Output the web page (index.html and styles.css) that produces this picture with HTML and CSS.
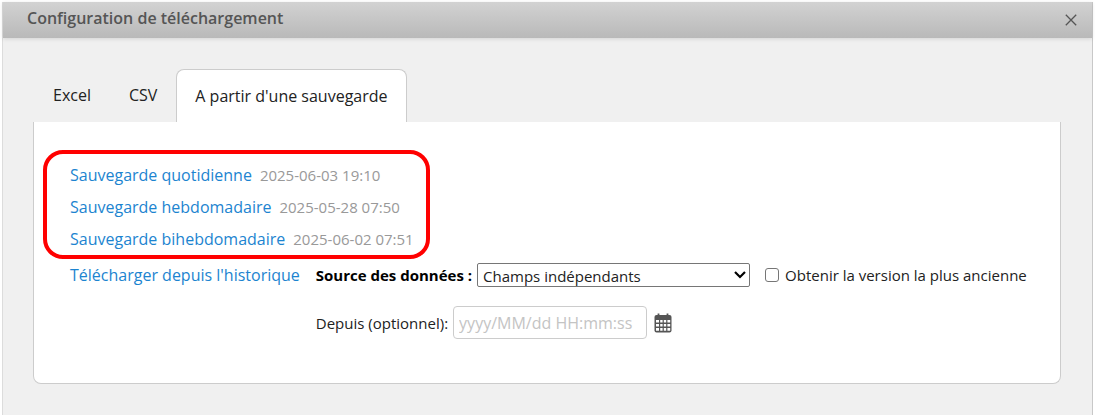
FILE: index.html
```html
<!DOCTYPE html>
<html lang="fr">
<head>
<meta charset="utf-8">
<title>Configuration de téléchargement</title>
<link rel="stylesheet" href="styles.css">
</head>
<body>
<main class="dialog">
  <header class="dialog-header">
    <h1 class="dialog-title">Configuration de téléchargement</h1>
    <button class="close" type="button" aria-label="Fermer">
      <svg width="12" height="12" viewBox="0 0 12 12" fill="none" stroke="currentColor" stroke-width="1.3"><path d="M0.8 0.8 L11.2 11.2 M11.2 0.8 L0.8 11.2"/></svg>
    </button>
  </header>
  <div class="dialog-body">
    <nav class="tabs">
      <button class="tab" type="button">Excel</button>
      <button class="tab" type="button">CSV</button>
      <button class="tab tab-active" type="button">A partir d'une sauvegarde</button>
    </nav>
    <section class="panel">
      <ul class="backups">
        <li class="backup"><a class="link" href="#">Sauvegarde quotidienne</a><time class="date">2025-06-03 19:10</time></li>
        <li class="backup"><a class="link" href="#">Sauvegarde hebdomadaire</a><time class="date">2025-05-28 07:50</time></li>
        <li class="backup"><a class="link" href="#">Sauvegarde bihebdomadaire</a><time class="date">2025-06-02 07:51</time></li>
      </ul>
      <div class="history">
        <a class="link" href="#">Télécharger depuis l'historique</a>
        <form class="options">
          <div class="row">
            <label class="label-strong" for="source">Source des données :</label>
            <span class="select-wrap">
              <select class="select" id="source"><option>Champs indépendants</option></select>
              <svg class="chevron" width="12" height="8" viewBox="0 0 12 8" fill="none" stroke="currentColor" stroke-width="2.2"><path d="M1 1 L6 6 L11 1"/></svg>
            </span>
            <input class="check" type="checkbox" id="oldest">
            <label class="label" for="oldest">Obtenir la version la plus ancienne</label>
          </div>
          <div class="row">
            <label class="label" for="since">Depuis (optionnel):</label>
            <input class="input" type="text" id="since" placeholder="yyyy/MM/dd HH:mm:ss">
            <button class="calendar" type="button" aria-label="Choisir une date">
              <svg width="18" height="20" viewBox="0 0 18 20">
                <rect x="0.5" y="2" width="17" height="17.5" rx="2" fill="#555"/>
                <path d="M4.5 0.5V4M13.5 0.5V4" stroke="#555" stroke-width="1.8"/>
                <path fill="#fff" d="M2 7h3v2.6H2zM6.2 7h2.4v2.6H6.2zM9.8 7h2.4v2.6H9.8zM13.4 7h2.8v2.6h-2.8zM2 11h3v2.6H2zM6.2 11h2.4v2.6H6.2zM9.8 11h2.4v2.6H9.8zM13.4 11h2.8v2.6h-2.8zM2 15h3v2.8H2zM6.2 15h2.4v2.8H6.2zM9.8 15h2.4v2.8H9.8zM13.4 15h2.8v2.8h-2.8z"/>
              </svg>
            </button>
          </div>
        </form>
      </div>
    </section>
  </div>
</main>
</body>
</html>
```
FILE: styles.css
```css
* {
  box-sizing: border-box;
}

body {
  margin: 0;
  padding: 2px 2px 1px;
  background: #fff;
  color: #222;
  font-family: "Open Sans", "Noto Sans", sans-serif;
  font-size: 15px;
  line-height: 20px;
}

button,
input,
select {
  margin: 0;
  font: inherit;
  color: inherit;
}

.dialog {
  background: #f0f0f0;
  border: 1px solid #dcdcdc;
  border-top: 0;
  border-bottom: 0;
  border-right-color: #c8c8c8;
}

.dialog-header {
  display: flex;
  align-items: center;
  justify-content: space-between;
  height: 36px;
  padding: 0 15px 0 24px;
  background: linear-gradient(#d2d2d2, #b9b9b9);
  box-shadow: 0 1px 4px rgba(0, 0, 0, 0.12);
}

.dialog-title {
  margin: 0;
  padding-bottom: 5px;
  font-size: 16px;
  font-weight: 600;
  line-height: 20px;
  color: #555;
}

.close,
.calendar {
  display: flex;
  padding: 0;
  border: 0;
  background: none;
  color: #555;
}

.dialog-body {
  padding: 31px 31px 31px 30px;
}

.tabs {
  display: flex;
  padding-left: 1px;
}

.tab {
  height: 53px;
  padding: 0 19px 2px;
  border: 0;
  background: none;
  font-size: 16px;
}

.tab-active {
  padding: 0 18px;
  border: 1px solid #ccc;
  border-bottom: 0;
  border-radius: 8px 8px 0 0;
  background: #fff;
}

.panel {
  padding: 28px 30px 44px 9px;
  border: 1px solid #ccc;
  border-top: 0;
  border-radius: 0 0 8px 8px;
  background: #fff;
}

.backups {
  display: flex;
  flex-direction: column;
  gap: 12px;
  width: 387px;
  margin: 0;
  padding: 11px 0 6px 23px;
  border: 4px solid #f00;
  border-radius: 20px;
  list-style: none;
  white-space: nowrap;
}

.backup {
  display: flex;
  gap: 8px;
}

.link {
  color: #1c84d0;
  font-size: 16px;
  text-decoration: none;
  white-space: nowrap;
}

.date {
  color: #999;
}

.history {
  display: flex;
  gap: 16px;
  padding: 4px 0 0 27px;
  line-height: 24px;
}

.options {
  display: flex;
  flex-direction: column;
  gap: 19px;
}

.row {
  display: flex;
  align-items: center;
  white-space: nowrap;
}

.label-strong {
  color: #000;
  font-weight: 700;
}

.select-wrap {
  display: grid;
  align-items: center;
  width: 273px;
  margin: 0 15px 0 5px;
}

.select {
  grid-area: 1 / 1;
  width: 100%;
  height: 24px;
  padding: 0 24px 0 5px;
  appearance: none;
  border: 1px solid #767676;
  border-radius: 2px;
  background: #fff;
}

.chevron {
  grid-area: 1 / 1;
  justify-self: end;
  margin-right: 4px;
  color: #000;
  pointer-events: none;
}

.check {
  width: 14px;
  height: 14px;
  margin-right: 6px;
  appearance: none;
  border: 1px solid #767676;
  border-radius: 3px;
  background: #fff;
}

.input {
  width: 194px;
  height: 33px;
  margin: 0 7px 0 5px;
  padding: 0 5px;
  border: 1px solid #ccc;
  border-radius: 4px;
  background: #fff;
  font-size: 16px;
}

.input::placeholder {
  color: #c4c4c4;
}
```
